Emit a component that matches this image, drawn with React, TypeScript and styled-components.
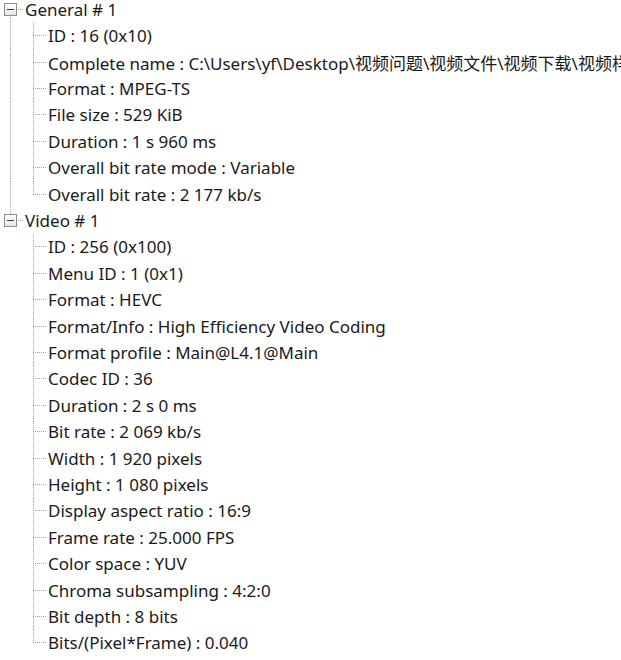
import styled, { createGlobalStyle } from "styled-components";

const GlobalStyle = createGlobalStyle`
  html, body {
    margin: 0;
    padding: 0;
    background: #ffffff;
    overflow: hidden;
  }
`;

const DOT = "#a3a3a3";
const ROW_H = 26.42;

type VLine = "none" | "full" | "top" | "bottom";

const vDots = `repeating-linear-gradient(to bottom, ${DOT} 0 1px, transparent 1px 2px)`;
const hDots = `repeating-linear-gradient(to right, ${DOT} 0 1px, transparent 1px 2px)`;

// dotted guide lines are drawn as background layers of each gutter cell
const guideBg = (v: VLine, h: boolean) => {
  const layers: string[] = [];
  const sizes: string[] = [];
  const pos: string[] = [];
  if (v !== "none") {
    layers.push(vDots);
    sizes.push(v === "full" ? "1px 100%" : "1px 50%");
    pos.push(v === "bottom" ? "10px 100%" : "10px 0");
  }
  if (h) {
    layers.push(hDots);
    sizes.push("13px 1px");
    pos.push("10px 50%");
  }
  if (!layers.length) return "background: none;";
  return `
    background-image: ${layers.join(", ")};
    background-size: ${sizes.join(", ")};
    background-position: ${pos.join(", ")};
    background-repeat: no-repeat;
  `;
};

interface Section {
  title: string;
  items: string[];
}

const SECTIONS: Section[] = [
  {
    title: "General # 1",
    items: [
      "ID : 16 (0x10)",
      "Complete name : C:\\Users\\yf\\Desktop\\视频问题\\视频文件\\视频下载\\视频样本.ts",
      "Format : MPEG-TS",
      "File size : 529 KiB",
      "Duration : 1 s 960 ms",
      "Overall bit rate mode : Variable",
      "Overall bit rate : 2 177 kb/s",
    ],
  },
  {
    title: "Video # 1",
    items: [
      "ID : 256 (0x100)",
      "Menu ID : 1 (0x1)",
      "Format : HEVC",
      "Format/Info : High Efficiency Video Coding",
      "Format profile : Main@L4.1@Main",
      "Codec ID : 36",
      "Duration : 2 s 0 ms",
      "Bit rate : 2 069 kb/s",
      "Width : 1 920 pixels",
      "Height : 1 080 pixels",
      "Display aspect ratio : 16:9",
      "Frame rate : 25.000 FPS",
      "Color space : YUV",
      "Chroma subsampling : 4:2:0",
      "Bit depth : 8 bits",
      "Bits/(Pixel*Frame) : 0.040",
    ],
  },
];

const App = () => {
  return (
    <>
      <GlobalStyle />
      <Tree>
        {SECTIONS.map((s, si) => {
          const isFirst = si === 0;
          const isLast = si === SECTIONS.length - 1;
          const rootLine: VLine = isFirst && isLast ? "none" : isFirst ? "bottom" : isLast ? "top" : "full";
          return (
            <li key={s.title}>
              <Row>
                <Guide $v={rootLine} $h>
                  <ToggleBox>
                    <Minus />
                  </ToggleBox>
                </Guide>
                <Label>{s.title}</Label>
              </Row>
              <Children>
                {s.items.map((item, i) => (
                  <li key={item}>
                    <Row>
                      <Guide $v={isLast ? "none" : "full"} />
                      <Guide $v={i === s.items.length - 1 ? "top" : "full"} $h />
                      <Label>{item}</Label>
                    </Row>
                  </li>
                ))}
              </Children>
            </li>
          );
        })}
      </Tree>
    </>
  );
};

const Tree = styled.ul`
  list-style: none;
  margin: -4px 0 0 0;
  padding: 0;
  overflow: hidden;
  font-family: "Noto Sans", "Noto Sans CJK SC", sans-serif;
  font-size: 17px;
  color: #1a1a1a;
`;

const Children = styled.ul`
  list-style: none;
  margin: 0;
  padding: 0;
`;

const Row = styled.div`
  display: flex;
  align-items: stretch;
  height: ${ROW_H}px;
  white-space: nowrap;
  overflow: hidden;
`;

const Guide = styled.span<{ $v: VLine; $h?: boolean }>`
  flex: none;
  width: 23px;
  display: flex;
  align-items: center;
  ${(p) => guideBg(p.$v, !!p.$h)}
`;

const ToggleBox = styled.span`
  box-sizing: border-box;
  width: 13px;
  height: 13px;
  margin-left: 4px;
  border: 1px solid #8e8e8e;
  background: linear-gradient(#ffffff, #e6e6e6);
  display: flex;
  align-items: center;
  justify-content: center;
`;

const Minus = styled.span`
  width: 7px;
  height: 1px;
  background: #3a3a3a;
`;

const Label = styled.span`
  padding-left: 2px;
  display: flex;
  align-items: center;
`;

export default App;
